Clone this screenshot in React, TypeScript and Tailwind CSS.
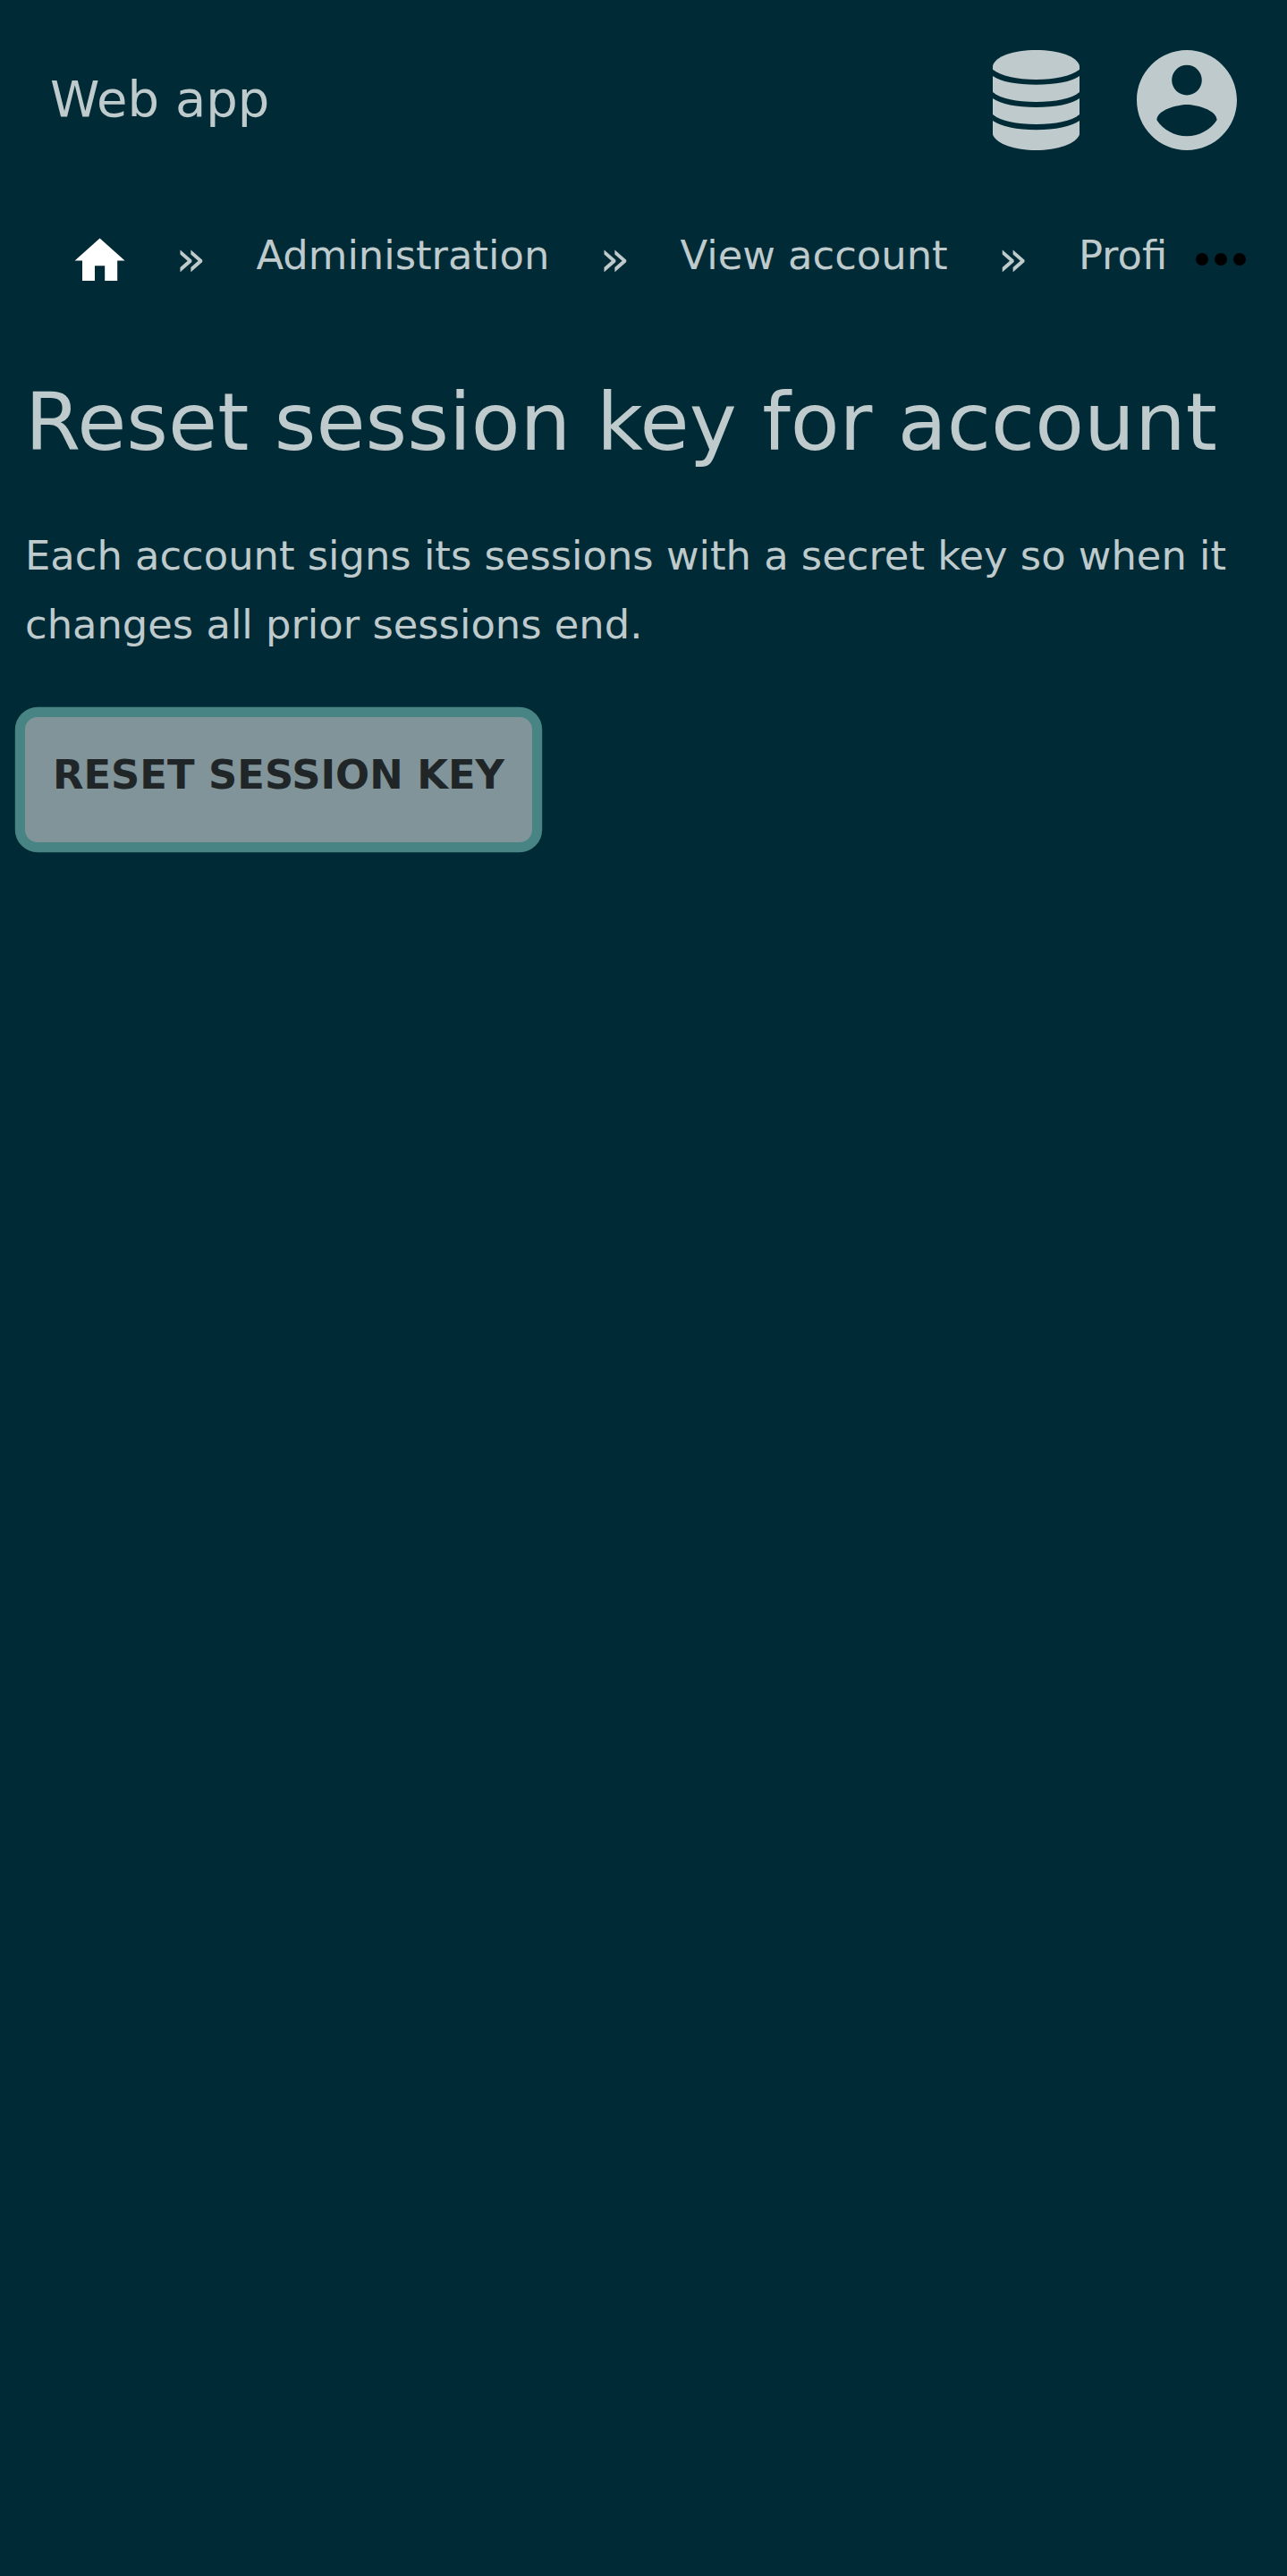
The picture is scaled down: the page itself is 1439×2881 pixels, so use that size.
import React from "react";

function DatabaseIcon() {
  return (
    <svg viewBox="0 0 97 112" className="h-28 w-[97px]" fill="currentColor">
      <path d="M0 17.500C3 7 23 0 48.500 0S94 7 97 17.500V21.800C88 29 70 33 48.500 33S9 29 0 21.800Z" />
      <path d="M0 29C9 35.500 27 38.700 48.500 38.700S88 35.500 97 29V47C88 54.500 70 58 48.500 58S9 54.500 0 47Z" />
      <path d="M0 54C9 60.500 27 64 48.500 64S88 60.500 97 54V72C88 79.500 70 83 48.500 83S9 79.500 0 72Z" />
      <path d="M0 79C9 85.500 27 89.200 48.500 89.200S88 85.500 97 79V94.500C93 105 72 112 48.500 112S4 105 0 94.500Z" />
    </svg>
  );
}

function AccountIcon() {
  return (
    <svg viewBox="2 2 20 20" className="size-28" fill="currentColor">
      <path d="M12 2C6.48 2 2 6.48 2 12s4.48 10 10 10 10-4.48 10-10S17.52 2 12 2zm0 3c1.66 0 3 1.34 3 3s-1.34 3-3 3-3-1.34-3-3 1.34-3 3-3zm0 14.200c-2.500 0-4.710-1.280-6-3.220.03-1.990 4-3.080 6-3.080 1.990 0 5.970 1.090 6 3.080-1.290 1.940-3.500 3.220-6 3.220z" />
    </svg>
  );
}

function Separator() {
  return <span className="w-[146.300px] shrink-0 pt-[3px] pl-14 text-[56px] leading-[78px]">»</span>;
}

export default function App() {
  return (
    <div className="min-h-[2881px] w-full bg-[#002b36] font-['DejaVu_Sans',sans-serif] text-[44.8px] text-[#bfcacc]">
      <header className="flex h-56 items-center justify-between px-14">
        <span className="-mt-0.5 text-[56px] leading-[112px]">Web app</span>
        <div className="flex gap-16">
          <DatabaseIcon />
          <AccountIcon />
        </div>
      </header>

      <nav className="flex h-[112px] items-start pt-[23px] pl-[78.4px]">
        <div className="flex w-[1230.6px] items-start overflow-hidden leading-[78px] whitespace-nowrap">
          <svg viewBox="0 0 24 24" className="mt-[11px] -mr-[5.400px] size-[67.2px] shrink-0 text-white" fill="currentColor">
            <path d="M10 20v-6h4v6h5v-8h3L12 3 2 12h3v8z" />
          </svg>
          <Separator />
          <a>Administration</a>
          <Separator />
          <a>View account</a>
          <Separator />
          <a>Profile</a>
        </div>
        <svg viewBox="4 10 16 4" className="mt-[36px] ml-7 h-3.5 w-14 shrink-0 text-black" fill="currentColor">
          <circle cx="6" cy="12" r="2" />
          <circle cx="12" cy="12" r="2" />
          <circle cx="18" cy="12" r="2" />
        </svg>
      </nav>

      <main className="px-7 pt-[76px]">
        <h1 className="text-[89.6px] leading-[120px] whitespace-nowrap">Reset session key for account</h1>
        <p className="mt-[51px] leading-[77px]">
          Each account signs its sessions with a secret key so when it changes all prior sessions end.
        </p>
        <button className="mt-[64.5px] block h-[140px] w-[567px] rounded-[14px] bg-[#80949a] pb-[9px] text-center leading-[78px] font-bold whitespace-nowrap text-[#202628] shadow-[0_0_0_11.2px_#488483]">
          RESET SESSION KEY
        </button>
      </main>
    </div>
  );
}
